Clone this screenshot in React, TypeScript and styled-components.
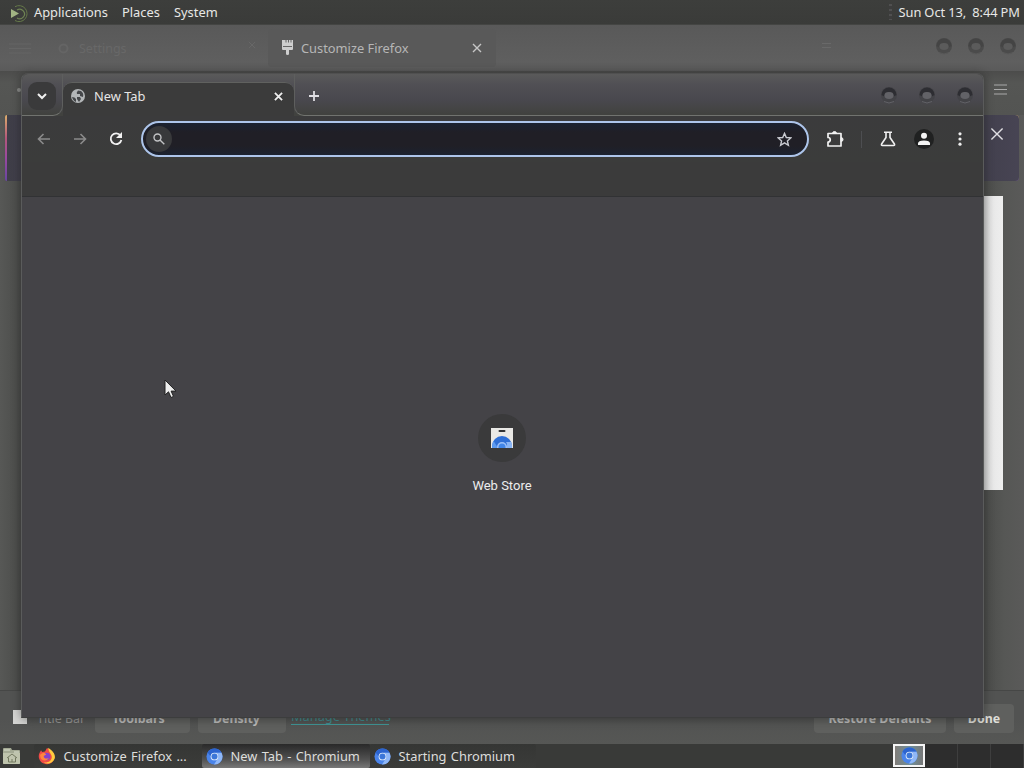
import React from "react";
import styled, { createGlobalStyle } from "styled-components";

const GlobalStyle = createGlobalStyle`
  * { box-sizing: border-box; }
  body { margin: 0; overflow: hidden; font-family: "Noto Sans", sans-serif; font-size: 12.85px; }
  svg { display: block; flex: none; }
`;

const Desktop = styled.div`
  position: relative;
  display: flex;
  flex-direction: column;
  width: 1024px;
  height: 768px;
  overflow: hidden;
  background: #525351;
`;

const TopPanel = styled.header`
  display: flex;
  align-items: center;
  height: 25px;
  flex: none;
  padding: 0 4px 0 10px;
  color: #e8e8e6;
  background: linear-gradient(#3d3e3c, #3a3b39);
  border-bottom: 1px solid #444543;
`;

const MenuLabel = styled.span<{ $width: number }>`
  width: ${(p) => p.$width}px;
  line-height: 24px;
  white-space: nowrap;
`;

const MateLogo = styled.svg`
  margin-top: 3px;
`;

const Clock = styled.span`
  word-spacing: -0.4px;
`;

const PanelGrip = styled.span`
  width: 3px;
  height: 16px;
  margin: 0 7px 0 auto;
  background: repeating-linear-gradient(#505050 0 2px, #3d3d3d 2px 5px);
`;

const FirefoxWindow = styled.section`
  display: flex;
  flex-direction: column;
  height: 719px;
  flex: none;
  background: linear-gradient(90deg, #575856 0, #4b4c4a 20px, #4b4c4a 984px, #565755 1004px, #5a5a59 100%);
`;

const FirefoxTabs = styled.div`
  display: flex;
  align-items: center;
  height: 46px;
  flex: none;
  padding: 0 7px 0 9px;
  color: #666;
  background: linear-gradient(#595959, #5f5f5f 80%, #5a5a5a);
`;

const FadedTab = styled.div`
  display: flex;
  align-items: center;
  gap: 9px;
  width: 212px;
  margin-left: 20px;
  padding: 0 7px 0 6px;
  font-size: 12.5px;
  color: #686868;
  > :last-child { margin: -6px 0 0 auto; }
`;

const FirefoxTab = styled.div`
  display: flex;
  align-items: center;
  width: 228px;
  height: 38px;
  margin: 0 0 0 5px;
  padding: 0 14px 1px 12px;
  border-radius: 4px;
  color: #b6b6b6;
  background: #595959;
  gap: 6px;
  > :last-child { margin-left: auto; }
`;

const WindowButtons = styled.div<{ $gap: number; $lift: number }>`
  display: flex;
  align-items: center;
  gap: ${(p) => p.$gap}px;
  margin: 0 0 ${(p) => p.$lift}px auto;
`;

const TabsOverflow = styled.span`
  width: 9px;
  height: 5px;
  margin: -6px 0 0 326px;
  border: solid #696969;
  border-width: 1px 0;
`;

const FirefoxToolbar = styled.div`
  display: flex;
  align-items: center;
  justify-content: space-between;
  height: 44px;
  flex: none;
  padding: 0 17px 7px;
  background: linear-gradient(#4c4c4b, #555654 12px, #535452);
`;

const BackTip = styled.span`
  width: 4px;
  height: 4px;
  border-radius: 50%;
  background: #8b8c8a;
`;

const Notification = styled.div`
  display: flex;
  align-items: flex-start;
  justify-content: flex-end;
  height: 66px;
  flex: none;
  margin: 0 5px;
  padding: 12px 15px;
  border-radius: 2px 4px 4px 2px;
  border-left: 2px solid transparent;
  background: linear-gradient(90deg, #3f3e48, #42404d 30px, #42404d 975px, #474453 1010px) padding-box,
    linear-gradient(#dcae6b, #b4587b 35%, #9a49a0 65%, #6846a0) border-box;
`;

const FirefoxPage = styled.div`
  display: flex;
  justify-content: flex-end;
  flex: 1;
  padding: 15px 21px;
`;

const WhitePage = styled.div`
  width: 120px;
  height: 294px;
  background: linear-gradient(90deg, #d8d8d8 84%, #e9e9e9 92%, #eeeeee);
`;

const FirefoxFooter = styled.footer`
  display: flex;
  align-items: flex-start;
  height: 54px;
  flex: none;
  padding: 13px 10px 0 13px;
  color: #aaaaa8;
  background: linear-gradient(#525352, #525352 28px, #565755);
  border-top: 1px solid #464746;
  > * { flex: none; }
`;

const CheckBox = styled.span`
  width: 14px;
  height: 14px;
  margin: 6px 10px 0 0;
  background: #d4d4d2;
`;

const FooterLabel = styled.span`
  width: 58px;
  font-size: 12.4px;
  line-height: 29px;
  color: #969695;
`;

const FooterButton = styled.span<{ $width: number; $gap?: number; $bright?: boolean; $shift?: number }>`
  width: ${(p) => p.$width}px;
  height: 29px;
  margin-left: ${(p) => p.$gap ?? 0}px;
  padding-right: ${(p) => p.$shift ?? 0}px;
  border-radius: 4px;
  text-align: center;
  font-size: 12.4px;
  font-weight: 700;
  line-height: 29px;
  color: ${(p) => (p.$bright ? "#deded8" : "#bdbdbc")};
  background: #5f605e;
`;

const FooterLink = styled.span`
  width: 98px;
  height: 21px;
  margin-left: 5px;
  white-space: nowrap;
  font-size: 12.8px;
  line-height: 25px;
  color: #3f8e91;
  border-bottom: 1px solid #3f9696;
`;

const ChromiumWindow = styled.section`
  position: absolute;
  left: 21px;
  top: 73px;
  display: flex;
  flex-direction: column;
  width: 963px;
  height: 645px;
  overflow: hidden;
  border: 1px solid #5a5b5b;
  border-top-color: #505050;
  border-bottom-color: #3c3d3d;
  border-radius: 7px 7px 0 0;
  background: #3b3b3b;
`;

const WindowShadow = styled.div`
  position: absolute;
  left: 21px;
  top: 73px;
  width: 963px;
  height: 645px;
  border-radius: 7px;
  box-shadow: 0 1px 9px 1px rgba(25, 25, 25, 0.42);
`;

const TabStrip = styled.div`
  display: flex;
  height: 42px;
  flex: none;
  background: linear-gradient(#5a5a5a, #504f54 11px, #49484e 26px, #41423f 40px);
`;

const StripEdge = styled.div<{ $grow?: boolean; $width?: number; $side: "left" | "right" }>`
  display: flex;
  align-items: center;
  width: ${(p) => (p.$width ? p.$width + "px" : "auto")};
  flex: ${(p) => (p.$grow ? 1 : "none")};
  border-bottom: 1px solid #71736f;
  ${(p) =>
    p.$side === "left"
      ? "border-right: 1px solid #5e5f5e; border-bottom-right-radius: 10px; padding: 0 4px 0 6px;"
      : "border-left: 1px solid #5e5f5e; border-bottom-left-radius: 10px; padding: 3px 9px 0 12px;"}
`;

const TabSearch = styled.span`
  display: grid;
  place-items: center;
  width: 28px;
  height: 28px;
  margin-top: 3px;
  border-radius: 9px;
  background: #3a3a3b;
`;

const ActiveTab = styled.div`
  display: flex;
  align-items: center;
  flex: none;
  width: 231px;
  height: 34px;
  margin-top: 8px;
  padding: 0 11px 7px 8px;
  border: 1px solid #60615f;
  border-width: 1px 0 0;
  border-radius: 9px 9px 0 0;
  color: #e5e5e5;
  background: #3b3b3b;
  gap: 9px;
  > span { flex: 1; line-height: 26px; }
`;

const Toolbar = styled.div`
  display: flex;
  align-items: center;
  height: 46px;
  flex: none;
  padding-left: 14px;
  background: linear-gradient(#3b3b3c, #3b3c3b);
  > * { flex: none; }
`;

const NavIcon = styled.span<{ $width: number }>`
  display: grid;
  place-items: center;
  width: ${(p) => p.$width}px;
  height: 32px;
`;

const AddressBar = styled.div`
  display: flex;
  align-items: center;
  justify-content: space-between;
  width: 668px;
  height: 36px;
  margin-left: 9px;
  padding: 0 15px 0 3px;
  border: 2px solid #adc5ea;
  border-radius: 18px;
  background: linear-gradient(#1b2230, #201f26 30%, #201f26 72%, #1b2230);
`;

const SearchBadge = styled.span`
  display: grid;
  place-items: center;
  width: 26px;
  height: 26px;
  border-radius: 50%;
  background: #38393b;
`;

const Divider = styled.span`
  width: 1px;
  height: 17px;
  margin-right: 8px;
  background: #4d4e51;
`;

const Avatar = styled.span`
  display: grid;
  place-items: center;
  width: 20px;
  height: 20px;
  margin: 0 8px;
  border-radius: 50%;
  background: #202121;
`;

const BookmarkBar = styled.div`
  height: 35px;
  flex: none;
  background: #3b3b3b;
  border-bottom: 1px solid #313234;
`;

const NewTabPage = styled.main`
  display: flex;
  flex-direction: column;
  align-items: center;
  flex: 1;
  padding: 217px 1px 0 0;
  background: #444347;
`;

const ShortcutTile = styled.div`
  display: grid;
  place-items: center;
  width: 48px;
  height: 48px;
  border-radius: 50%;
  background: #3a3a3b;
`;

const ShortcutLabel = styled.div`
  margin-top: 16px;
  color: #ededed;
  font: 13px/15px Roboto, sans-serif;
`;

const Taskbar = styled.footer`
  display: flex;
  align-items: center;
  height: 24px;
  flex: none;
  color: #dededc;
  background: #393a38;
`;

const FolderSlot = styled.span`
  width: 34px;
  padding-left: 2px;
`;

const TaskItem = styled.div<{ $width: number; $active?: boolean }>`
  display: flex;
  align-items: center;
  width: ${(p) => p.$width}px;
  height: 24px;
  padding: 0 0 0 4px;
  gap: 7.5px;
  white-space: nowrap;
  word-spacing: 1px;
  border-radius: 2px;
  line-height: 22px;
  background: ${(p) =>
    p.$active ? "linear-gradient(#292929, #3c3c3c 32%, #525252 65%, #787878)" : "linear-gradient(#353634, #3b3c3a)"};
`;

const Workspaces = styled.div`
  display: flex;
  margin-left: auto;
  width: 131px;
  height: 24px;
`;

const Workspace = styled.div<{ $active?: boolean }>`
  display: grid;
  place-items: center;
  width: ${(p) => (p.$active ? 32 : 33)}px;
  height: ${(p) => (p.$active ? 23 : 24)}px;
  border: ${(p) => (p.$active ? "2px solid #f5f5f5" : "0 solid #3e3e3e")};
  border-right-width: ${(p) => (p.$active ? 2 : 1)}px;
  background: ${(p) => (p.$active ? "linear-gradient(90deg, #817d79, #6f8f99 55%, #777)" : "#2d2d2d")};
`;

const Pointer = styled.svg`
  position: absolute;
  left: 164px;
  top: 379px;
`;

function CloseIcon({ size = 8, color = "#eee", width = 2 }: { size?: number; color?: string; width?: number }) {
  return (
    <svg width={size} height={size} viewBox="0 0 10 10" stroke={color} strokeWidth={width} fill="none">
      <path d="m1 1 8 8m0-8L1 9" />
    </svg>
  );
}

function RoundButton({ dim }: { dim?: boolean }) {
  return (
    <svg width="18" height="18" viewBox="0 0 18 18">
      <circle cx="9" cy="9" r="8" fill={dim ? "#4b4b4b" : "#434347"} />
      <path d="M1.5 9a7.5 7.5 0 0 1 15 0l-3 1.5a4.5 4.5 0 0 0-9 0Z" fill={dim ? "#444" : "#2d2d32"} />
      <ellipse cx="9" cy="9.5" rx="4.6" ry="3.4" fill={dim ? "#5b5b5b" : "#626267"} />
      <path d="M4 15.5q5 3 10 0" fill="none" stroke={dim ? "#595959" : "#626267"} />
    </svg>
  );
}

function MenuIcon({ color, width }: { color: string; width: number }) {
  return (
    <svg width={width} height="11" viewBox="0 0 14 11" preserveAspectRatio="none" stroke={color} strokeWidth="1.2">
      <path d="M0 1h14M0 5.5h14M0 10h14" />
    </svg>
  );
}

function ArrowIcon({ back }: { back?: boolean }) {
  return (
    <svg width="14" height="12" viewBox="0 0 14 12" fill="none" stroke="#8b8b8b" strokeWidth="1.6">
      <path d={back ? "M13 6H1.5M6.5 1l-5 5 5 5" : "M1 6h11.5M7.5 1l5 5-5 5"} />
    </svg>
  );
}

function ChromiumIcon({ size = 17 }: { size?: number }) {
  return (
    <svg width={size} height={size} viewBox="0 0 18 18">
      <circle cx="9" cy="9" r="8.5" fill="#4a84ea" />
      <path d="M1.6 4.8A8.5 8.5 0 0 1 16.4 5H9a4 4 0 0 0-4 4Z" fill="#2c64cf" />
      <path d="M16.4 5a8.5 8.5 0 0 1-7.9 12.5L12.5 11A4 4 0 0 0 10 5Z" fill="#8fb7f7" />
      <circle cx="9" cy="9" r="4.1" fill="#e4eefb" />
      <circle cx="9" cy="9" r="3.2" fill="#3b76d8" />
    </svg>
  );
}

function FirefoxIcon() {
  return (
    <svg width="18" height="18" viewBox="0 0 18 18">
      <path d="M3 3.2 4.2 5 7 4.4 9 1q3 1.5 4 4l1-.8c5 6 1 13-5 13S-1 11 1.5 6L3 3.2Z" fill="#f14b46" />
      <path d="M10.2.8c4.4 2.7 7.8 7 6.4 11-1.5 4.2-7.3 6.2-11 3.7 5 .5 8-1.5 8.2-5.4.1-2.8-3.3-4.5-3.6-9.3Z" fill="#ffcb3e" />
      <circle cx="8.5" cy="9.5" r="3.8" fill="#8543cb" />
      <path d="M2 8c3-3 5-2.2 6.3-.4L5.7 9c.3 3 3 3 5 2-1.1 3.2-7 3.3-8.2-.2Z" fill="#ff873e" />
    </svg>
  );
}

export default function App() {
  return (
    <Desktop>
      <GlobalStyle />
      <TopPanel>
        <MenuLabel $width={24}>
          <MateLogo width="19" height="18" viewBox="0 0 19 18" fill="none">
            <path d="M5 1.7A8 8 0 1 1 5 15.5" stroke="#657849" />
            <path d="M7 5a4.8 4.8 0 1 1 0 8" stroke="#6e8253" strokeWidth="1.2" />
            <path d="m1 4 8 4.5-8 4.5Z" fill="#a1b383" />
          </MateLogo>
        </MenuLabel>
        <MenuLabel $width={88}>Applications</MenuLabel>
        <MenuLabel $width={52}>Places</MenuLabel>
        <MenuLabel $width={60}>System</MenuLabel>
        <PanelGrip />
        <Clock>Sun Oct 13,&nbsp; 8:44 PM</Clock>
      </TopPanel>

      <FirefoxWindow>
        <FirefoxTabs>
          <MenuIcon color="#656565" width={22} />
          <FadedTab>
            <svg width="13" height="13" viewBox="0 0 13 13" fill="none" stroke="#656565" strokeWidth="2">
              <circle cx="6.5" cy="6.5" r="4" />
            </svg>
            <span>Settings</span>
            <CloseIcon color="#686868" width={1.2} />
          </FadedTab>
          <FirefoxTab>
            <svg width="15" height="17" viewBox="0 0 15 17">
              <path d="M2 1h11v9q0 1-1 1H9v4q0 1-1.5 1T6 15v-4H3q-1 0-1-1Z" fill="#cecece" />
              <path d="M6 1v2.5m2.5-2.5v2.5m2.5-2.5v2.5M3 7.5h9" stroke="#666" />
            </svg>
            <span>Customize Firefox</span>
            <CloseIcon size={10} color="#c6c6c6" width={1.4} />
          </FirefoxTab>
          <TabsOverflow />
          <WindowButtons $gap={14} $lift={4}>
            <RoundButton dim />
            <RoundButton dim />
            <RoundButton dim />
          </WindowButtons>
        </FirefoxTabs>
        <FirefoxToolbar>
          <BackTip />
          <MenuIcon color="#aaa" width={13} />
        </FirefoxToolbar>
        <Notification>
          <CloseIcon size={14} color="#e1e0e4" width={1} />
        </Notification>
        <FirefoxPage>
          <WhitePage />
        </FirefoxPage>
        <FirefoxFooter>
          <CheckBox />
          <FooterLabel>Title Bar</FooterLabel>
          <FooterButton $width={95} $shift={8}>Toolbars</FooterButton>
          <FooterButton $width={88} $gap={8} $shift={11}>Density</FooterButton>
          <FooterLink>Manage Themes</FooterLink>
          <FooterButton $width={132} $gap={425}>Restore Defaults</FooterButton>
          <FooterButton $width={60} $gap={8} $bright>Done</FooterButton>
        </FirefoxFooter>
      </FirefoxWindow>

      <WindowShadow />
      <ChromiumWindow>
        <TabStrip>
          <StripEdge $side="left" $width={41}>
            <TabSearch>
              <svg width="10" height="7" viewBox="0 0 10 7" fill="none" stroke="#f0f0f0" strokeWidth="2">
                <path d="m1 1 4 4 4-4" />
              </svg>
            </TabSearch>
          </StripEdge>
          <ActiveTab>
            <svg width="14" height="14" viewBox="0 0 14 14">
              <circle cx="7" cy="7" r="7" fill="#b3b6b8" />
              <path d="M1 8q3 0 4 2v3Q2 12 1 8ZM7 1.5q-2 2-1 3.5h3v2l3 1q1-4-2-6ZM6 8h3l1 2-2 3-2-3Z" fill="#45474a" />
            </svg>
            <span>New Tab</span>
            <CloseIcon size={9} />
          </ActiveTab>
          <StripEdge $side="right" $grow>
            <svg width="14" height="14" viewBox="0 0 14 14" stroke="#dfdee3" strokeWidth="1.8">
              <path d="M2 7h10M7 2v10" />
            </svg>
            <WindowButtons $gap={20} $lift={2}>
              <RoundButton />
              <RoundButton />
              <RoundButton />
            </WindowButtons>
          </StripEdge>
        </TabStrip>
        <Toolbar>
          <NavIcon $width={16}><ArrowIcon back /></NavIcon>
          <NavIcon $width={56}><ArrowIcon /></NavIcon>
          <NavIcon $width={16}>
            <svg width="14" height="14" viewBox="0 0 14 14">
              <path d="M11.5 3.5A5.4 5.4 0 1 0 12.4 8" fill="none" stroke="#f2f2f2" strokeWidth="1.8" />
              <path d="M13 0v6H7Z" fill="#f2f2f2" />
            </svg>
          </NavIcon>
          <NavIcon $width={8} />
          <AddressBar>
            <SearchBadge>
              <svg width="12" height="12" viewBox="0 0 12 12" fill="none" stroke="#c2c3c5" strokeWidth="1.4">
                <circle cx="4.5" cy="4.5" r="3.5" />
                <path d="m7 7 4.3 4.3" />
              </svg>
            </SearchBadge>
            <svg width="15" height="15" viewBox="0 0 15 15" fill="none" stroke="#c8cad0" strokeWidth="1.4">
              <path d="m7.5 1.4 1.8 4.1 4.5.4-3.4 3 1 4.4-3.9-2.4-3.9 2.4 1-4.4-3.4-3 4.5-.4Z" />
            </svg>
          </AddressBar>
          <NavIcon $width={52}>
            <svg width="18" height="18" viewBox="0 0 18 18" fill="none" stroke="#f1f1f1" strokeWidth="1.7" strokeLinejoin="round">
              <path d="M2 3.5h13V16H2v-4a2.2 2.2 0 0 0 0-4.5Z" />
              <path d="M6.5 3.5a2 2 0 0 1 4 0ZM15 7.5a2 2 0 0 1 0 4Z" fill="#f1f1f1" strokeWidth="1" />
            </svg>
          </NavIcon>
          <Divider />
          <NavIcon $width={36}>
            <svg width="16" height="16" viewBox="0 0 16 16" fill="none" stroke="#f1f1f1" strokeWidth="1.6" strokeLinejoin="round">
              <path d="M4 1.2h8M6 1.5v5L1.6 13q-.6 1.5.8 1.5h11.2q1.4 0 .8-1.5L10 6.5v-5" />
            </svg>
          </NavIcon>
          <Avatar>
            <svg width="14" height="14" viewBox="0 0 14 14" fill="#f4f4f4">
              <circle cx="7" cy="3.8" r="3" />
              <path d="M1 13v-1.6q0-3 6-3t6 3V13Z" />
            </svg>
          </Avatar>
          <NavIcon $width={36}>
            <svg width="4" height="16" viewBox="0 0 4 16" fill="#eee">
              <circle cx="2" cy="2.8" r="1.6" /><circle cx="2" cy="8" r="1.6" /><circle cx="2" cy="13.2" r="1.6" />
            </svg>
          </NavIcon>
        </Toolbar>
        <BookmarkBar />
        <NewTabPage>
          <ShortcutTile>
            <svg width="24" height="22" viewBox="0 0 24 22">
              <path d="M1 1h22v20H1Z" fill="#e9e8e5" />
              <rect x="8.5" y="3" width="7" height="2" rx="1" fill="#303133" />
              <path d="M2 21v-2a10 10 0 0 1 20 0v2Z" fill="#2f6fd6" />
              <path d="M16 21a5 5 0 0 0 0-6h5.2q1.2 3 .8 6Z" fill="#8ab5f5" />
              <path d="M2 21q-.5-4 1.6-7L8 21Z" fill="#5c9af0" />
              <path d="M7 21v-1a5 5 0 0 1 10 0v1Z" fill="#9cc0f8" />
              <path d="M8.5 21v-1a3.5 3.5 0 0 1 7 0v1Z" fill="#4286e8" />
            </svg>
          </ShortcutTile>
          <ShortcutLabel>Web Store</ShortcutLabel>
        </NewTabPage>
      </ChromiumWindow>

      <Taskbar>
        <FolderSlot>
          <svg width="19" height="18" viewBox="0 0 19 18">
            <path d="M1 2q0-1 1-1h7l1 2h7q1 0 1 1v12q0 1-1 1H2q-1 0-1-1Z" fill="#a4aa94" />
            <path d="M1 6h17v10q0 1-1 1H2q-1 0-1-1Z" fill="#bfc4ad" />
            <path d="M2 3h6M12 5h5" stroke="#dadfcd" />
            <path d="m5 11 5-4 5 4M6.5 10.5V15h7v-4.5M10 15v-3" stroke="#72785f" fill="none" />
          </svg>
        </FolderSlot>
        <TaskItem $width={168}>
          <FirefoxIcon />
          <span>Customize Firefox ...</span>
        </TaskItem>
        <TaskItem $width={168} $active>
          <ChromiumIcon />
          <span>New Tab - Chromium</span>
        </TaskItem>
        <TaskItem $width={166}>
          <ChromiumIcon />
          <span>Starting Chromium</span>
        </TaskItem>
        <Workspaces>
          <Workspace $active><ChromiumIcon size={17} /></Workspace>
          <Workspace />
          <Workspace />
          <Workspace />
        </Workspaces>
      </Taskbar>

      <Pointer width="13" height="20" viewBox="0 0 13 20">
        <path d="M1 1v15l3.5-3.2L7 18.5l2.5-1.1-2.4-5.3H12Z" fill="#eee" stroke="#222" />
      </Pointer>
    </Desktop>
  );
}
